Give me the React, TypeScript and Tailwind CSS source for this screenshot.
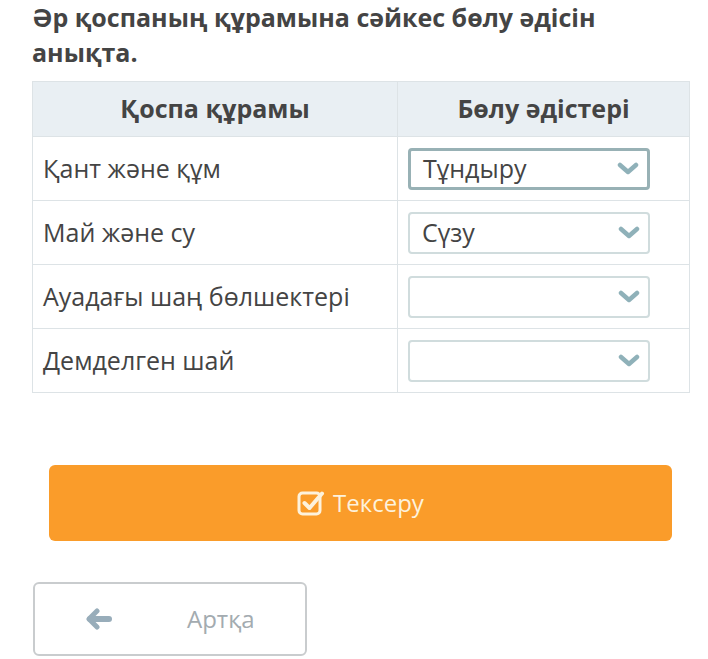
import React from "react";

const rows = [
  { label: "Қант және құм", value: "Тұндыру", focused: true },
  { label: "Май және су", value: "Сүзу", focused: false },
  { label: "Ауадағы шаң бөлшектері", value: "", focused: false },
  { label: "Демделген шай", value: "", focused: false },
];

function Chevron() {
  return (
    <svg width="22" height="14" viewBox="0 0 22 14">
      <path d="M3 3 L11 10 L19 3" fill="none" stroke="#8fb1b9" strokeWidth="4.5" strokeLinecap="round" strokeLinejoin="round" />
    </svg>
  );
}

export default function App() {
  return (
    <div className="w-[708px] h-[659px] bg-white overflow-hidden" style={{ fontFamily: '"Open Sans", sans-serif' }}>
      <div className="pl-[32px] pr-[18px]">
        <h1 className="pt-0 text-[25px] leading-[35px] font-bold text-[#444]">
          Әр қоспаның құрамына сәйкес бөлу әдісін анықта.
        </h1>
        <table className="mt-[11px] w-[658px] border-collapse border border-[#dde3e6] text-[#444]">
          <thead>
            <tr className="bg-[#e9eff3] h-[55px]">
              <th className="w-[365px] border border-[#dde3e6] text-[25px] font-bold text-center">Қоспа құрамы</th>
              <th className="border border-[#dde3e6] text-[25px] font-bold text-center">Бөлу әдістері</th>
            </tr>
          </thead>
          <tbody>
            {rows.map((r) => (
              <tr key={r.label} className="h-[64px]">
                <td className="border border-[#dde3e6] pl-[10px] text-[25px] font-normal">{r.label}</td>
                <td className="border border-[#dde3e6] pl-[10px] pr-[39px]">
                  <div
                    className={
                      "h-[42px] rounded-[4px] flex items-center justify-between pl-[12px] pr-[8px] text-[25px] text-[#444] " +
                      (r.focused ? "border-[3px] border-[#98b1b5]" : "border-2 border-[#d0dcdd]")
                    }
                  >
                    <span>{r.value}</span>
                    <Chevron />
                  </div>
                </td>
              </tr>
            ))}
          </tbody>
        </table>
      </div>
      <div className="pl-[49px] mt-[72px]">
        <button className="w-[623px] h-[76px] rounded-[6px] bg-[#fa9c2a] flex items-center justify-center gap-[8px] text-[#fdf2dc] text-[24px]">
          <svg width="28" height="28" viewBox="0 0 28 28">
            <rect x="2" y="4" width="21" height="21" rx="3.5" fill="none" stroke="#fdf2dc" strokeWidth="3" />
            <path d="M7.5 14 L12.5 19 L25 4.5" fill="none" stroke="#fdf2dc" strokeWidth="4" strokeLinecap="round" strokeLinejoin="round" />
          </svg>
          <span>Тексеру</span>
        </button>
      </div>
      <div className="pl-[33px] mt-[41px]">
        <button className="w-[274px] h-[74px] rounded-[6px] border-2 border-[#c9ccce] bg-white flex items-center text-[24px] text-[#a3abb0]">
          <svg className="ml-[50px]" width="28" height="22" viewBox="0 0 28 22">
            <path d="M12 3 L4 11 L12 19" fill="none" stroke="#98adba" strokeWidth="5" strokeLinecap="round" strokeLinejoin="round" />
            <path d="M5 11 L24 11" fill="none" stroke="#98adba" strokeWidth="6" strokeLinecap="round" />
          </svg>
          <span className="ml-[74px]">Артқа</span>
        </button>
      </div>
    </div>
  );
}
